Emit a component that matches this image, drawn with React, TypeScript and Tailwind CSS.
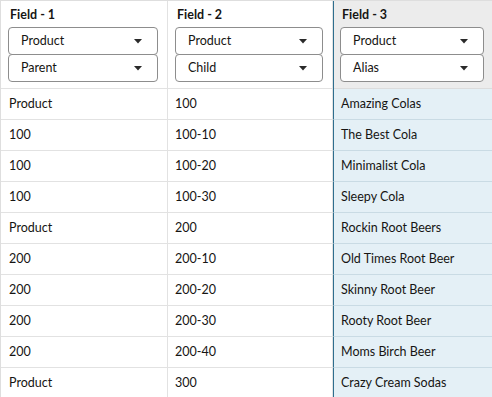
const rows: [string, string, string][] = [
  ['Product', '100', 'Amazing Colas'],
  ['100', '100-10', 'The Best Cola'],
  ['100', '100-20', 'Minimalist Cola'],
  ['100', '100-30', 'Sleepy Cola'],
  ['Product', '200', 'Rockin Root Beers'],
  ['200', '200-10', 'Old Times Root Beer'],
  ['200', '200-20', 'Skinny Root Beer'],
  ['200', '200-30', 'Rooty Root Beer'],
  ['200', '200-40', 'Moms Birch Beer'],
  ['Product', '300', 'Crazy Cream Sodas'],
]

function Select({ label }: { label: string }) {
  return (
    <div className="flex h-[28px] items-center justify-between rounded-[4px] border border-[#8d8d8d] bg-white pl-[12px] pr-[15px] text-[12.5px] text-[#161513]">
      <span>{label}</span>
      <svg width="8" height="5" viewBox="0 0 8 5">
        <polygon points="0,0 8,0 4,4.5" fill="#2a2a2a" />
      </svg>
    </div>
  )
}

function Header({ title, a, b, last }: { title: string; a: string; b: string; last?: boolean }) {
  return (
    <div
      className={
        last
          ? 'flex h-[88px] flex-col border-b border-[#dcdcdc] bg-[#ececec] pl-[6px] pr-[8px] pt-[4px]'
          : 'flex h-[88px] flex-col border-b border-r border-[#e2e2e2] bg-white pl-[7px] pr-[9px] pt-[4px]'
      }
    >
      <div className="h-[22px] pl-[2px] text-[12.5px] font-bold leading-[20px] text-[#161513]">{title}</div>
      <Select label={a} />
      <div className="-mt-px">
        <Select label={b} />
      </div>
    </div>
  )
}

export default function App() {
  return (
    <div
      className="h-[397px] w-[492px] overflow-hidden border-l border-t border-[#dedede] bg-white"
      style={{ fontFamily: 'Lato, "Noto Sans", sans-serif' }}
    >
      <div className="grid grid-cols-[167px_165px_1fr]">
        <Header title="Field - 1" a="Product" b="Parent" />
        <Header title="Field - 2" a="Product" b="Child" />
        <div className="border-l border-[#2e6e8e]">
          <Header title="Field - 3" a="Product" b="Alias" last />
        </div>
        {rows.map((r, i) => (
          <div key={i} className="contents">
            <div className="flex h-[31px] items-center border-b border-r border-[#e2e2e2] pl-[8px] text-[12.5px] text-[#161513]">
              {r[0]}
            </div>
            <div className="flex h-[31px] items-center border-b border-r border-[#e2e2e2] pl-[7px] text-[12.5px] text-[#161513]">
              {r[1]}
            </div>
            <div className="flex h-[31px] items-center border-b border-l border-b-[#c9dbe4] border-l-[#2e6e8e] bg-[#e4f0f6] pl-[7px] text-[12.5px] text-[#161513]">
              {r[2]}
            </div>
          </div>
        ))}
      </div>
    </div>
  )
}
